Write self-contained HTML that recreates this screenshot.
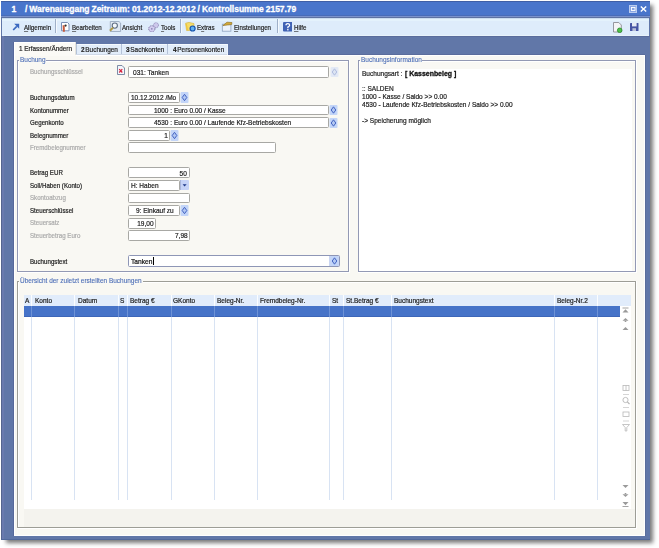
<!DOCTYPE html>
<html><head><meta charset="utf-8"><style>
html,body{margin:0;padding:0;background:#ffffff;}
body{width:659px;height:548px;position:relative;overflow:hidden;font-family:"Liberation Sans", sans-serif;}
body>div,body>svg{position:absolute;}
.t{white-space:pre;}
u{text-decoration:underline;text-decoration-thickness:0.5px;text-underline-offset:0.6px;text-decoration-color:rgba(40,40,40,0.6);}
</style></head><body>
<div style="left:6px;top:5px;width:647.1px;height:538.3px;background:rgba(10,10,10,0.55);filter:blur(1.9px)"></div>
<div style="left:1px;top:1px;width:649px;height:539px;background:#6177a8;"></div>
<div style="left:1px;top:1px;width:649px;height:1px;background:#3f5fa6;"></div>
<div style="left:1px;top:2px;width:649px;height:13px;background:#4975cb;"></div>
<div style="left:1px;top:15px;width:649px;height:1px;background:#486cb8;"></div>
<div style="left:1px;top:16px;width:649px;height:1px;background:#7a92cc;"></div>
<div style="left:1px;top:17px;width:649px;height:1px;background:#5e72a2;"></div>
<div style="left:2px;top:18px;width:647px;height:1px;background:#c9dcef;"></div>
<div style="left:2px;top:19px;width:647px;height:16px;background:#deecfb;"></div>
<div style="left:2px;top:19px;width:647px;height:2px;background:#e4f2fc;"></div>
<div style="left:2px;top:35px;width:647px;height:1px;background:#e8f3fb;"></div>
<div style="left:1px;top:36px;width:649px;height:1px;background:#5a6c9c;"></div>
<div style="left:2px;top:37px;width:647px;height:17px;background:#6177a8;"></div>
<div style="left:14px;top:54px;width:631px;height:1px;background:#5a6c9c;"></div>
<div style="left:13px;top:42px;width:1px;height:494px;background:#58699a;"></div>
<div style="left:2px;top:36px;width:2px;height:504px;background:#6a7aae;"></div>
<div style="left:1px;top:36px;width:1px;height:504px;background:#56658f;"></div>
<div style="left:645px;top:55px;width:1px;height:481px;background:#5a6d9a;"></div>
<div style="left:1px;top:539px;width:649px;height:1px;background:#52699b;"></div>
<div class="t" style="left:11.5px;top:5.20px;font-size:8.5px;line-height:8.5px;color:#ffffff;font-weight:bold;transform:scaleX(1);transform-origin:0 0;-webkit-text-stroke:0.3px #ffffff;">1</div>
<div class="t" style="left:25px;top:5.20px;font-size:8.5px;line-height:8.5px;color:#ffffff;font-weight:bold;transform:scaleX(1);transform-origin:0 0;-webkit-text-stroke:0.3px #ffffff;letter-spacing:-0.04px;word-spacing:-0.3px">/ Warenausgang Zeitraum: 01.2012-12.2012 / Kontrollsumme 2157.79</div>
<svg style="left:629px;top:5px" width="8" height="8" viewBox="0 0 8 8"><rect x="0.5" y="0.5" width="7" height="7" fill="#8aa6e2" stroke="#b9cbef" stroke-width="1"/><rect x="2.5" y="2.5" width="3.5" height="3" fill="none" stroke="#ffffff" stroke-width="0.9"/></svg>
<svg style="left:640px;top:6px" width="7" height="6" viewBox="0 0 7 6"><path d="M0.8 0.5 L6.2 5.5 M6.2 0.5 L0.8 5.5" stroke="#ffffff" stroke-width="1.4"/></svg>
<div class="t" style="left:23.5px;top:23.87px;font-size:7px;line-height:7px;color:#1e1e1e;font-weight:normal;transform:scaleX(0.88);transform-origin:0 0;-webkit-text-stroke:0.2px #1e1e1e;"><u>A</u>llgemein</div>
<div class="t" style="left:71.7px;top:23.87px;font-size:7px;line-height:7px;color:#1e1e1e;font-weight:normal;transform:scaleX(0.88);transform-origin:0 0;-webkit-text-stroke:0.2px #1e1e1e;"><u>B</u>earbeiten</div>
<div class="t" style="left:121.7px;top:23.87px;font-size:7px;line-height:7px;color:#1e1e1e;font-weight:normal;transform:scaleX(0.88);transform-origin:0 0;-webkit-text-stroke:0.2px #1e1e1e;">Ansi<u>c</u>ht</div>
<div class="t" style="left:160.8px;top:23.87px;font-size:7px;line-height:7px;color:#1e1e1e;font-weight:normal;transform:scaleX(0.88);transform-origin:0 0;-webkit-text-stroke:0.2px #1e1e1e;"><u>T</u>ools</div>
<div class="t" style="left:197.4px;top:23.87px;font-size:7px;line-height:7px;color:#1e1e1e;font-weight:normal;transform:scaleX(0.88);transform-origin:0 0;-webkit-text-stroke:0.2px #1e1e1e;">E<u>x</u>tras</div>
<div class="t" style="left:234.2px;top:23.87px;font-size:7px;line-height:7px;color:#1e1e1e;font-weight:normal;transform:scaleX(0.88);transform-origin:0 0;-webkit-text-stroke:0.2px #1e1e1e;"><u>E</u>instellungen</div>
<div class="t" style="left:293.7px;top:23.87px;font-size:7px;line-height:7px;color:#1e1e1e;font-weight:normal;transform:scaleX(0.88);transform-origin:0 0;-webkit-text-stroke:0.2px #1e1e1e;"><u>H</u>ilfe</div>
<div style="left:55px;top:19px;width:1px;height:14px;background:#9fb0c8;"></div>
<div style="left:56px;top:19px;width:1px;height:14px;background:#f4f9fe;"></div>
<div style="left:180px;top:19px;width:1px;height:14px;background:#9fb0c8;"></div>
<div style="left:181px;top:19px;width:1px;height:14px;background:#f4f9fe;"></div>
<div style="left:277px;top:19px;width:1px;height:14px;background:#9fb0c8;"></div>
<div style="left:278px;top:19px;width:1px;height:14px;background:#f4f9fe;"></div>
<svg style="left:12px;top:23px" width="8" height="8" viewBox="0 0 8 8"><path d="M1.2 7 L4.8 3.4" stroke="#3a68c0" stroke-width="1.7" fill="none"/><path d="M2.2 0.8 H7.2 V5.8 Z" fill="#3a68c0"/></svg>
<svg style="left:60px;top:21px" width="10" height="12" viewBox="0 0 10 12"><path d="M1.5 1.5 H7.5 L9 3 V9.8 H1.5 Z" fill="#ffffff" stroke="#7a90b8" stroke-width="1"/><path d="M3.6 4.2 L3.9 10.8" stroke="#c85a3c" stroke-width="2"/><circle cx="5.6" cy="4.6" r="1.1" fill="#2c3030"/></svg>
<svg style="left:108px;top:20px" width="14" height="13" viewBox="0 0 14 13"><path d="M2.3 1.5 H11 L12.6 3 V11.5 H2.3 Z" fill="#dfe8f3" stroke="#9aaac0" stroke-width="0.9"/><circle cx="6.8" cy="5.6" r="2.6" fill="#f4f8fc" stroke="#5f6f84" stroke-width="1.1"/><path d="M5 7.6 L2 10.8" stroke="#b09a48" stroke-width="2"/></svg>
<svg style="left:147px;top:20px" width="12" height="12" viewBox="0 0 12 12"><circle cx="9" cy="5.2" r="2.5" fill="#cdc8ec" stroke="#8c86b4" stroke-width="0.9" stroke-dasharray="1.2 0.6"/><circle cx="4.8" cy="8.8" r="3.1" fill="#d3cdf0" stroke="#807aa8" stroke-width="1" stroke-dasharray="1.3 0.7"/><circle cx="4.8" cy="8.8" r="0.9" fill="#8c86b4"/></svg>
<svg style="left:185px;top:21px" width="11" height="11" viewBox="0 0 11 11"><path d="M0.6 2.2 L4 1.4 L9 2.6 L8.6 9.2 L1.6 9.6 Z" fill="#f4dc6a" stroke="#d9b848" stroke-width="0.7"/><path d="M1.2 3 L2.6 9.2" stroke="#f0c63a" stroke-width="1.2"/><circle cx="7.6" cy="7.5" r="2.5" fill="#5fb0f0" stroke="#1452b0" stroke-width="1.2"/></svg>
<svg style="left:221px;top:21px" width="12" height="11" viewBox="0 0 12 11"><rect x="1.3" y="3.2" width="8.6" height="7" fill="#edf3fb" stroke="#8ea2c0" stroke-width="0.8"/><path d="M1.8 4.6 L6 1.2 L11 1.6 L10.6 3.6 L6.5 4 Z" fill="#d4aa38" stroke="#8a6a1a" stroke-width="0.6"/></svg>
<svg style="left:282.5px;top:22px" width="9.5" height="9.5" viewBox="0 0 9.5 9.5"><rect x="0" y="0" width="9.5" height="9.5" rx="1" fill="#3f62b4"/><path d="M3 3.3 Q3 1.7 4.8 1.7 Q6.6 1.7 6.6 3.2 Q6.6 4.3 4.9 5 L4.9 6.2" stroke="#fff" stroke-width="1.3" fill="none"/><rect x="4.2" y="7" width="1.3" height="1.4" fill="#fff"/></svg>
<svg style="left:613px;top:22px" width="10" height="11" viewBox="0 0 10 11"><path d="M0.5 0.5 H5.8 L8.3 3 V10 H0.5 Z" fill="#f4f4f6" stroke="#8c8c94" stroke-width="0.9"/><circle cx="6.7" cy="8.3" r="2.3" fill="#4fc04a" stroke="#2a8a2a" stroke-width="0.8"/></svg>
<svg style="left:630px;top:23px" width="9" height="8" viewBox="0 0 9 8"><rect x="0" y="0" width="8.5" height="8" rx="0.6" fill="#4654a4"/><rect x="2" y="0" width="4.6" height="3.4" fill="#e6eaf4"/><rect x="2.4" y="5.2" width="3.6" height="2.8" fill="#b8bfd8"/></svg>
<div style="left:14px;top:55px;width:631px;height:481px;background:#f9f8f3;"></div>
<div style="left:14px;top:55px;width:631px;height:1px;background:#ffffff;"></div>
<div style="left:14px;top:55px;width:1px;height:481px;background:#ffffff;"></div>
<div style="left:644px;top:55px;width:1px;height:481px;background:#ffffff;"></div>
<div style="left:14px;top:535px;width:631px;height:1px;background:#ffffff;"></div>
<div style="left:14px;top:42px;width:62px;height:14px;background:#fbfaf6;"></div>
<div style="left:14px;top:42px;width:62px;height:1px;background:#ffffff;"></div>
<div style="left:14px;top:42px;width:1px;height:14px;background:#ffffff;"></div>
<div style="left:75px;top:42px;width:1px;height:13px;background:#e4e3dd;"></div>
<div style="left:76px;top:44px;width:45px;height:11px;background:#e2edfa;"></div>
<div style="left:76px;top:44px;width:1px;height:11px;background:#b4c2d8;"></div>
<div style="left:77px;top:44px;width:44px;height:1px;background:#f4f9fe;"></div>
<div style="left:76px;top:54px;width:45px;height:1px;background:#d0dae8;"></div>
<div style="left:121px;top:44px;width:46px;height:11px;background:#e2edfa;"></div>
<div style="left:121px;top:44px;width:1px;height:11px;background:#b4c2d8;"></div>
<div style="left:122px;top:44px;width:45px;height:1px;background:#f4f9fe;"></div>
<div style="left:121px;top:54px;width:46px;height:1px;background:#d0dae8;"></div>
<div style="left:167px;top:44px;width:61px;height:11px;background:#e2edfa;"></div>
<div style="left:167px;top:44px;width:1px;height:11px;background:#b4c2d8;"></div>
<div style="left:168px;top:44px;width:60px;height:1px;background:#f4f9fe;"></div>
<div style="left:167px;top:54px;width:61px;height:1px;background:#d0dae8;"></div>
<div style="left:227px;top:44px;width:1px;height:11px;background:#eef4fc;"></div>
<div class="t" style="left:19.3px;top:45.47px;font-size:7px;line-height:7px;color:#1e1e1e;font-weight:normal;transform:scaleX(0.915);transform-origin:0 0;-webkit-text-stroke:0.2px #1e1e1e;">1 Erfassen/Ändern</div>
<div class="t" style="left:81px;top:45.67px;font-size:7px;line-height:7px;color:#1e1e1e;font-weight:normal;transform:scaleX(0.92);transform-origin:0 0;-webkit-text-stroke:0.2px #1e1e1e;word-spacing:-1px"><b style="font-weight:bold;margin-right:0.8px">2</b>Buchungen</div>
<div class="t" style="left:125.8px;top:45.67px;font-size:7px;line-height:7px;color:#1e1e1e;font-weight:normal;transform:scaleX(0.92);transform-origin:0 0;-webkit-text-stroke:0.2px #1e1e1e;word-spacing:-1px"><b style="font-weight:bold;margin-right:0.8px">3</b>Sachkonten</div>
<div class="t" style="left:172.7px;top:45.67px;font-size:7px;line-height:7px;color:#1e1e1e;font-weight:normal;transform:scaleX(0.92);transform-origin:0 0;-webkit-text-stroke:0.2px #1e1e1e;word-spacing:-1px"><b style="font-weight:bold;margin-right:0.8px">4</b>Personenkonten</div>
<div style="left:359px;top:62px;width:276px;height:7px;background:#f9f8f4;"></div>
<div style="left:359px;top:69px;width:273px;height:202px;background:#ffffff;"></div>
<div style="left:17px;top:60px;width:332px;height:1px;background:#9399b4;"></div>
<div style="left:17px;top:271px;width:332px;height:1px;background:#9399b4;"></div>
<div style="left:17px;top:60px;width:1px;height:212px;background:#9399b4;"></div>
<div style="left:348px;top:60px;width:1px;height:212px;background:#9399b4;"></div>
<div style="left:18px;top:61px;width:330px;height:1px;background:#ffffff;"></div>
<div style="left:18px;top:61px;width:1px;height:210px;background:#ffffff;"></div>
<div style="left:349px;top:60px;width:1px;height:213px;background:#ffffff;"></div>
<div style="left:17px;top:272px;width:333px;height:1px;background:#ffffff;"></div>
<div style="left:19px;top:56px;width:27px;height:7px;background:#f9f8f3;"></div>
<div class="t" style="left:20px;top:55.67px;font-size:7px;line-height:7px;color:#4a6cb6;font-weight:normal;transform:scaleX(0.925);transform-origin:0 0;-webkit-text-stroke:0.1px #4a6cb6;">Buchung</div>
<div style="left:358px;top:60px;width:278px;height:1px;background:#9399b4;"></div>
<div style="left:358px;top:271px;width:278px;height:1px;background:#9399b4;"></div>
<div style="left:358px;top:60px;width:1px;height:212px;background:#9399b4;"></div>
<div style="left:635px;top:60px;width:1px;height:212px;background:#9399b4;"></div>
<div style="left:359px;top:61px;width:276px;height:1px;background:#ffffff;"></div>
<div style="left:359px;top:61px;width:1px;height:210px;background:#ffffff;"></div>
<div style="left:636px;top:60px;width:1px;height:213px;background:#ffffff;"></div>
<div style="left:358px;top:272px;width:279px;height:1px;background:#ffffff;"></div>
<div style="left:360px;top:56px;width:62px;height:7px;background:#f9f8f3;"></div>
<div class="t" style="left:361px;top:55.87px;font-size:7px;line-height:7px;color:#4a6cb6;font-weight:normal;transform:scaleX(0.925);transform-origin:0 0;-webkit-text-stroke:0.1px #4a6cb6;">Buchungsinformation</div>
<div style="left:17px;top:281px;width:619px;height:1px;background:#9d9d96;"></div>
<div style="left:17px;top:527px;width:619px;height:1px;background:#9d9d96;"></div>
<div style="left:17px;top:281px;width:1px;height:247px;background:#9d9d96;"></div>
<div style="left:635px;top:281px;width:1px;height:247px;background:#9d9d96;"></div>
<div style="left:18px;top:282px;width:617px;height:1px;background:#ffffff;"></div>
<div style="left:18px;top:282px;width:1px;height:245px;background:#ffffff;"></div>
<div style="left:636px;top:281px;width:1px;height:248px;background:#ffffff;"></div>
<div style="left:17px;top:528px;width:620px;height:1px;background:#ffffff;"></div>
<div style="left:19px;top:277px;width:124px;height:7px;background:#f9f8f3;"></div>
<div class="t" style="left:20px;top:277.27px;font-size:7px;line-height:7px;color:#4a6cb6;font-weight:normal;transform:scaleX(0.925);transform-origin:0 0;-webkit-text-stroke:0.1px #4a6cb6;">Übersicht der zuletzt erstellten Buchungen</div>
<div class="t" style="left:29.8px;top:67.67px;font-size:7px;line-height:7px;color:#aaaaaa;font-weight:normal;transform:scaleX(0.88);transform-origin:0 0;-webkit-text-stroke:0.2px #aaaaaa;">Buchungsschlüssel</div>
<svg style="left:117px;top:65px" width="8" height="10" viewBox="0 0 8 10"><path d="M0.5 0.5 H5 L7.5 3 V9.5 H0.5 Z" fill="#f4f6fb" stroke="#6f7f9c" stroke-width="0.9"/><path d="M2.2 4.2 L5.3 7.5 M5.3 4.2 L2.2 7.5" stroke="#d8203a" stroke-width="1.2"/></svg>
<div style="left:128px;top:66px;width:201px;height:12px;box-sizing:border-box;background:#ffffff;border:1px solid #a8a8a4;border-radius:1.5px;"></div>
<div class="t" style="left:133.4px;top:69.25px;font-size:7.5px;line-height:7.5px;color:#1c1c1c;font-weight:normal;transform:scaleX(0.88);transform-origin:0 0;-webkit-text-stroke:0.2px #1c1c1c;">031: Tanken</div>
<svg style="left:330px;top:67px;opacity:0.4;" width="9" height="10" viewBox="0 0 9 10"><rect x="0.5" y="0" width="8" height="10" rx="1" fill="#c3d5f8"/><path d="M4.5 1.7999999999999998 L6.8 5.0 L4.5 8.2 L2.2 5.0 Z" fill="#b3c8f2" stroke="#3d5fc0" stroke-width="0.95"/></svg>
<div class="t" style="left:29.8px;top:94.07px;font-size:7px;line-height:7px;color:#1c1c1c;font-weight:normal;transform:scaleX(0.88);transform-origin:0 0;-webkit-text-stroke:0.2px #1c1c1c;">Buchungsdatum</div>
<div class="t" style="left:29.8px;top:106.67px;font-size:7px;line-height:7px;color:#1c1c1c;font-weight:normal;transform:scaleX(0.88);transform-origin:0 0;-webkit-text-stroke:0.2px #1c1c1c;">Kontonummer</div>
<div class="t" style="left:29.8px;top:119.07px;font-size:7px;line-height:7px;color:#1c1c1c;font-weight:normal;transform:scaleX(0.88);transform-origin:0 0;-webkit-text-stroke:0.2px #1c1c1c;">Gegenkonto</div>
<div class="t" style="left:29.8px;top:131.57px;font-size:7px;line-height:7px;color:#1c1c1c;font-weight:normal;transform:scaleX(0.88);transform-origin:0 0;-webkit-text-stroke:0.2px #1c1c1c;">Belegnummer</div>
<div class="t" style="left:29.8px;top:143.97px;font-size:7px;line-height:7px;color:#aaaaaa;font-weight:normal;transform:scaleX(0.88);transform-origin:0 0;-webkit-text-stroke:0.2px #aaaaaa;">Fremdbelegnummer</div>
<div class="t" style="left:29.8px;top:169.37px;font-size:7px;line-height:7px;color:#1c1c1c;font-weight:normal;transform:scaleX(0.88);transform-origin:0 0;-webkit-text-stroke:0.2px #1c1c1c;">Betrag EUR</div>
<div class="t" style="left:29.8px;top:182.07px;font-size:7px;line-height:7px;color:#1c1c1c;font-weight:normal;transform:scaleX(0.88);transform-origin:0 0;-webkit-text-stroke:0.2px #1c1c1c;">Soll/Haben (Konto)</div>
<div class="t" style="left:29.8px;top:194.27px;font-size:7px;line-height:7px;color:#aaaaaa;font-weight:normal;transform:scaleX(0.88);transform-origin:0 0;-webkit-text-stroke:0.2px #aaaaaa;">Skontoabzug</div>
<div class="t" style="left:29.8px;top:206.87px;font-size:7px;line-height:7px;color:#1c1c1c;font-weight:normal;transform:scaleX(0.88);transform-origin:0 0;-webkit-text-stroke:0.2px #1c1c1c;">Steuerschlüssel</div>
<div class="t" style="left:29.8px;top:219.07px;font-size:7px;line-height:7px;color:#aaaaaa;font-weight:normal;transform:scaleX(0.88);transform-origin:0 0;-webkit-text-stroke:0.2px #aaaaaa;">Steuersatz</div>
<div class="t" style="left:29.8px;top:232.07px;font-size:7px;line-height:7px;color:#aaaaaa;font-weight:normal;transform:scaleX(0.88);transform-origin:0 0;-webkit-text-stroke:0.2px #aaaaaa;">Steuerbetrag Euro</div>
<div class="t" style="left:29.8px;top:257.87px;font-size:7px;line-height:7px;color:#1c1c1c;font-weight:normal;transform:scaleX(0.88);transform-origin:0 0;-webkit-text-stroke:0.2px #1c1c1c;">Buchungstext</div>
<div style="left:128px;top:92px;width:52px;height:11px;box-sizing:border-box;background:#ffffff;border:1px solid #a8a8a4;border-radius:1.5px;"></div>
<div class="t" style="left:131px;top:94.07px;font-size:7px;line-height:7px;color:#1c1c1c;font-weight:normal;transform:scaleX(0.93);transform-origin:0 0;-webkit-text-stroke:0.2px #1c1c1c;">10.12.2012 /Mo</div>
<svg style="left:180px;top:92px;" width="9" height="11" viewBox="0 0 9 11"><rect x="0.5" y="0" width="8" height="11" rx="1" fill="#c3d5f8"/><path d="M4.5 2.3 L6.8 5.5 L4.5 8.7 L2.2 5.5 Z" fill="#b3c8f2" stroke="#3d5fc0" stroke-width="0.95"/></svg>
<div style="left:128px;top:105px;width:201px;height:10px;box-sizing:border-box;background:#ffffff;border:1px solid #a8a8a4;border-radius:1.5px;"></div>
<div class="t" style="left:153.7px;top:106.67px;font-size:7px;line-height:7px;color:#1c1c1c;font-weight:normal;transform:scaleX(0.93);transform-origin:0 0;-webkit-text-stroke:0.2px #1c1c1c;">1000 : Euro 0.00 / Kasse</div>
<svg style="left:329px;top:105px;" width="9" height="10" viewBox="0 0 9 10"><rect x="0.5" y="0" width="8" height="10" rx="1" fill="#c3d5f8"/><path d="M4.5 1.7999999999999998 L6.8 5.0 L4.5 8.2 L2.2 5.0 Z" fill="#b3c8f2" stroke="#3d5fc0" stroke-width="0.95"/></svg>
<div style="left:128px;top:117px;width:201px;height:11px;box-sizing:border-box;background:#ffffff;border:1px solid #a8a8a4;border-radius:1.5px;"></div>
<div class="t" style="left:153.7px;top:119.07px;font-size:7px;line-height:7px;color:#1c1c1c;font-weight:normal;transform:scaleX(0.93);transform-origin:0 0;-webkit-text-stroke:0.2px #1c1c1c;">4530 : Euro 0.00 / Laufende Kfz-Betriebskosten</div>
<svg style="left:329px;top:118px;" width="9" height="10" viewBox="0 0 9 10"><rect x="0.5" y="0" width="8" height="10" rx="1" fill="#c3d5f8"/><path d="M4.5 1.7999999999999998 L6.8 5.0 L4.5 8.2 L2.2 5.0 Z" fill="#b3c8f2" stroke="#3d5fc0" stroke-width="0.95"/></svg>
<div style="left:128px;top:130px;width:42px;height:11px;box-sizing:border-box;background:#ffffff;border:1px solid #a8a8a4;border-radius:1.5px;"></div>
<div class="t" style="right:491px;top:131.67px;font-size:7px;line-height:7px;color:#1c1c1c;font-weight:normal;text-align:right;transform:scaleX(0.93);transform-origin:100% 0;-webkit-text-stroke:0.2px #1c1c1c;">1</div>
<svg style="left:170px;top:130px;" width="9" height="11" viewBox="0 0 9 11"><rect x="0.5" y="0" width="8" height="11" rx="1" fill="#c3d5f8"/><path d="M4.5 2.3 L6.8 5.5 L4.5 8.7 L2.2 5.5 Z" fill="#b3c8f2" stroke="#3d5fc0" stroke-width="0.95"/></svg>
<div style="left:128px;top:142px;width:148px;height:11px;box-sizing:border-box;background:#ffffff;border:1px solid #a8a8a4;border-radius:1.5px;"></div>
<div style="left:128px;top:167px;width:62px;height:11px;box-sizing:border-box;background:#ffffff;border:1px solid #a8a8a4;border-radius:1.5px;"></div>
<div class="t" style="right:471.8px;top:169.57px;font-size:7px;line-height:7px;color:#1c1c1c;font-weight:normal;text-align:right;transform:scaleX(0.93);transform-origin:100% 0;-webkit-text-stroke:0.2px #1c1c1c;">50</div>
<div style="left:128px;top:180px;width:52px;height:11px;box-sizing:border-box;background:#ffffff;border:1px solid #a8a8a4;border-radius:1.5px;"></div>
<div class="t" style="left:130.5px;top:182.07px;font-size:7px;line-height:7px;color:#1c1c1c;font-weight:normal;transform:scaleX(0.93);transform-origin:0 0;-webkit-text-stroke:0.2px #1c1c1c;">H: Haben</div>
<svg style="left:180px;top:180px" width="9" height="10" viewBox="0 0 9 10"><rect x="0" y="0" width="9" height="10" rx="1" fill="#c6d3f7"/><rect x="0" y="0" width="1" height="10" fill="#a9b6dc"/><path d="M2.6 4.2 H6.6 L4.6 6.6 Z" fill="#1f3a8a"/></svg>
<div style="left:128px;top:193px;width:62px;height:10px;box-sizing:border-box;background:#ffffff;border:1px solid #a8a8a4;border-radius:1.5px;"></div>
<div style="left:128px;top:205px;width:52px;height:11px;box-sizing:border-box;background:#ffffff;border:1px solid #a8a8a4;border-radius:1.5px;"></div>
<div class="t" style="left:136px;top:207.07px;font-size:7px;line-height:7px;color:#1c1c1c;font-weight:normal;transform:scaleX(0.93);transform-origin:0 0;-webkit-text-stroke:0.2px #1c1c1c;">9: Einkauf zu</div>
<svg style="left:180px;top:205px;" width="9" height="11" viewBox="0 0 9 11"><rect x="0.5" y="0" width="8" height="11" rx="1" fill="#c3d5f8"/><path d="M4.5 2.3 L6.8 5.5 L4.5 8.7 L2.2 5.5 Z" fill="#b3c8f2" stroke="#3d5fc0" stroke-width="0.95"/></svg>
<div style="left:128px;top:218px;width:28px;height:11px;box-sizing:border-box;background:#ffffff;border:1px solid #a8a8a4;border-radius:1.5px;"></div>
<div class="t" style="right:505.6px;top:219.57px;font-size:7px;line-height:7px;color:#1c1c1c;font-weight:normal;text-align:right;transform:scaleX(0.93);transform-origin:100% 0;-webkit-text-stroke:0.2px #1c1c1c;">19,00</div>
<div style="left:128px;top:230px;width:62px;height:11px;box-sizing:border-box;background:#ffffff;border:1px solid #a8a8a4;border-radius:1.5px;"></div>
<div class="t" style="right:471.8px;top:232.07px;font-size:7px;line-height:7px;color:#1c1c1c;font-weight:normal;text-align:right;transform:scaleX(0.93);transform-origin:100% 0;-webkit-text-stroke:0.2px #1c1c1c;">7,98</div>
<div style="left:128px;top:255px;width:212px;height:12px;box-sizing:border-box;background:#ffffff;border:1px solid #8e96b6;border-radius:1.5px;"></div>
<div style="left:329px;top:256px;width:10px;height:10px;background:#c9d5f2;"></div>
<div class="t" style="left:131px;top:257.87px;font-size:7px;line-height:7px;color:#111;font-weight:normal;transform:scaleX(0.95);transform-origin:0 0;-webkit-text-stroke:0.2px #111;">Tanken</div>
<div style="left:153px;top:257px;width:1px;height:8px;background:#000;"></div>
<svg style="left:329.5px;top:256px;" width="9" height="10" viewBox="0 0 9 10"><rect x="0.5" y="0" width="8" height="10" rx="1" fill="#c3d5f8"/><path d="M4.5 1.7999999999999998 L6.8 5.0 L4.5 8.2 L2.2 5.0 Z" fill="#b3c8f2" stroke="#3d5fc0" stroke-width="0.95"/></svg>
<div class="t" style="left:362.3px;top:70.27px;font-size:7px;line-height:7px;color:#1c1c1c;font-weight:normal;transform:scaleX(0.935);transform-origin:0 0;-webkit-text-stroke:0.2px #1c1c1c;">Buchungsart : </div>
<div class="t" style="left:405px;top:70.27px;font-size:7px;line-height:7px;color:#111;font-weight:bold;transform:scaleX(0.99);transform-origin:0 0;-webkit-text-stroke:0.3px #111;">[ Kassenbeleg ]</div>
<div class="t" style="left:362.3px;top:85.47px;font-size:7px;line-height:7px;color:#1c1c1c;font-weight:normal;transform:scaleX(0.935);transform-origin:0 0;-webkit-text-stroke:0.2px #1c1c1c;">:: SALDEN</div>
<div class="t" style="left:362.3px;top:93.27px;font-size:7px;line-height:7px;color:#1c1c1c;font-weight:normal;transform:scaleX(0.935);transform-origin:0 0;-webkit-text-stroke:0.2px #1c1c1c;">1000 - Kasse / Saldo &gt;&gt; 0.00</div>
<div class="t" style="left:362.3px;top:101.07px;font-size:7px;line-height:7px;color:#1c1c1c;font-weight:normal;transform:scaleX(0.935);transform-origin:0 0;-webkit-text-stroke:0.2px #1c1c1c;">4530 - Laufende Kfz-Betriebskosten / Saldo &gt;&gt; 0.00</div>
<div class="t" style="left:362.3px;top:116.67px;font-size:7px;line-height:7px;color:#1c1c1c;font-weight:normal;transform:scaleX(0.935);transform-origin:0 0;-webkit-text-stroke:0.2px #1c1c1c;">-&gt; Speicherung möglich</div>
<div style="left:24px;top:295px;width:607px;height:214px;background:#ffffff;"></div>
<div style="left:24px;top:509px;width:611px;height:18px;background:#f4f3ee;"></div>
<div style="left:24px;top:295px;width:607px;height:11px;background:#e1ecfb;"></div>
<div style="left:24px;top:306px;width:596px;height:11px;background:#4673c8;"></div>
<div style="left:24px;top:316px;width:596px;height:1px;background:#3d66b8;"></div>
<div style="left:31px;top:295px;width:1px;height:11px;background:#fbfdff;"></div>
<div style="left:31px;top:306px;width:1px;height:11px;background:#6d92d6;"></div>
<div style="left:31px;top:317px;width:1px;height:183px;background:#d8e3f3;"></div>
<div style="left:74px;top:295px;width:1px;height:11px;background:#fbfdff;"></div>
<div style="left:74px;top:306px;width:1px;height:11px;background:#6d92d6;"></div>
<div style="left:74px;top:317px;width:1px;height:183px;background:#d8e3f3;"></div>
<div style="left:118px;top:295px;width:1px;height:11px;background:#fbfdff;"></div>
<div style="left:118px;top:306px;width:1px;height:11px;background:#6d92d6;"></div>
<div style="left:118px;top:317px;width:1px;height:183px;background:#d8e3f3;"></div>
<div style="left:127px;top:295px;width:1px;height:11px;background:#fbfdff;"></div>
<div style="left:127px;top:306px;width:1px;height:11px;background:#6d92d6;"></div>
<div style="left:127px;top:317px;width:1px;height:183px;background:#d8e3f3;"></div>
<div style="left:171px;top:295px;width:1px;height:11px;background:#fbfdff;"></div>
<div style="left:171px;top:306px;width:1px;height:11px;background:#6d92d6;"></div>
<div style="left:171px;top:317px;width:1px;height:183px;background:#d8e3f3;"></div>
<div style="left:214px;top:295px;width:1px;height:11px;background:#fbfdff;"></div>
<div style="left:214px;top:306px;width:1px;height:11px;background:#6d92d6;"></div>
<div style="left:214px;top:317px;width:1px;height:183px;background:#d8e3f3;"></div>
<div style="left:257px;top:295px;width:1px;height:11px;background:#fbfdff;"></div>
<div style="left:257px;top:306px;width:1px;height:11px;background:#6d92d6;"></div>
<div style="left:257px;top:317px;width:1px;height:183px;background:#d8e3f3;"></div>
<div style="left:329px;top:295px;width:1px;height:11px;background:#fbfdff;"></div>
<div style="left:329px;top:306px;width:1px;height:11px;background:#6d92d6;"></div>
<div style="left:329px;top:317px;width:1px;height:183px;background:#d8e3f3;"></div>
<div style="left:343px;top:295px;width:1px;height:11px;background:#fbfdff;"></div>
<div style="left:343px;top:306px;width:1px;height:11px;background:#6d92d6;"></div>
<div style="left:343px;top:317px;width:1px;height:183px;background:#d8e3f3;"></div>
<div style="left:391px;top:295px;width:1px;height:11px;background:#fbfdff;"></div>
<div style="left:391px;top:306px;width:1px;height:11px;background:#6d92d6;"></div>
<div style="left:391px;top:317px;width:1px;height:183px;background:#d8e3f3;"></div>
<div style="left:554px;top:295px;width:1px;height:11px;background:#fbfdff;"></div>
<div style="left:554px;top:306px;width:1px;height:11px;background:#6d92d6;"></div>
<div style="left:554px;top:317px;width:1px;height:183px;background:#d8e3f3;"></div>
<div style="left:597px;top:295px;width:1px;height:11px;background:#fbfdff;"></div>
<div style="left:597px;top:306px;width:1px;height:11px;background:#6d92d6;"></div>
<div style="left:597px;top:317px;width:1px;height:183px;background:#d8e3f3;"></div>
<div class="t" style="left:25px;top:297.27px;font-size:7px;line-height:7px;color:#1c1c1c;font-weight:normal;transform:scaleX(0.93);transform-origin:0 0;-webkit-text-stroke:0.2px #1c1c1c;">A</div>
<div class="t" style="left:34.5px;top:297.27px;font-size:7px;line-height:7px;color:#1c1c1c;font-weight:normal;transform:scaleX(0.93);transform-origin:0 0;-webkit-text-stroke:0.2px #1c1c1c;">Konto</div>
<div class="t" style="left:77.5px;top:297.27px;font-size:7px;line-height:7px;color:#1c1c1c;font-weight:normal;transform:scaleX(0.93);transform-origin:0 0;-webkit-text-stroke:0.2px #1c1c1c;">Datum</div>
<div class="t" style="left:120px;top:297.27px;font-size:7px;line-height:7px;color:#1c1c1c;font-weight:normal;transform:scaleX(0.93);transform-origin:0 0;-webkit-text-stroke:0.2px #1c1c1c;">S</div>
<div class="t" style="left:130px;top:297.27px;font-size:7px;line-height:7px;color:#1c1c1c;font-weight:normal;transform:scaleX(0.93);transform-origin:0 0;-webkit-text-stroke:0.2px #1c1c1c;">Betrag €</div>
<div class="t" style="left:173px;top:297.27px;font-size:7px;line-height:7px;color:#1c1c1c;font-weight:normal;transform:scaleX(0.93);transform-origin:0 0;-webkit-text-stroke:0.2px #1c1c1c;">GKonto</div>
<div class="t" style="left:216.5px;top:297.27px;font-size:7px;line-height:7px;color:#1c1c1c;font-weight:normal;transform:scaleX(0.93);transform-origin:0 0;-webkit-text-stroke:0.2px #1c1c1c;">Beleg-Nr.</div>
<div class="t" style="left:259.8px;top:297.27px;font-size:7px;line-height:7px;color:#1c1c1c;font-weight:normal;transform:scaleX(0.93);transform-origin:0 0;-webkit-text-stroke:0.2px #1c1c1c;">Fremdbeleg-Nr.</div>
<div class="t" style="left:332px;top:297.27px;font-size:7px;line-height:7px;color:#1c1c1c;font-weight:normal;transform:scaleX(0.93);transform-origin:0 0;-webkit-text-stroke:0.2px #1c1c1c;">St</div>
<div class="t" style="left:346px;top:297.27px;font-size:7px;line-height:7px;color:#1c1c1c;font-weight:normal;transform:scaleX(0.93);transform-origin:0 0;-webkit-text-stroke:0.2px #1c1c1c;">St.Betrag €</div>
<div class="t" style="left:394.3px;top:297.27px;font-size:7px;line-height:7px;color:#1c1c1c;font-weight:normal;transform:scaleX(0.93);transform-origin:0 0;-webkit-text-stroke:0.2px #1c1c1c;">Buchungstext</div>
<div class="t" style="left:557px;top:297.27px;font-size:7px;line-height:7px;color:#1c1c1c;font-weight:normal;transform:scaleX(0.93);transform-origin:0 0;-webkit-text-stroke:0.2px #1c1c1c;">Beleg-Nr.2</div>
<svg style="left:621px;top:307px" width="9" height="25" viewBox="0 0 9 25"><path d="M1.5 1 H7.5" stroke="#9a9a9a" stroke-width="0.9"/><path d="M4.5 2.2 L7.5 5.5 H1.5 Z" fill="#9a9a9a"/><path d="M4.5 11 L7.5 13.8 H1.5 Z" fill="#9a9a9a"/><rect x="3.7" y="13.8" width="1.6" height="1.2" fill="#9a9a9a"/><path d="M4.5 20 L7.5 23 H1.5 Z" fill="#9a9a9a"/></svg>
<svg style="left:621px;top:484px" width="9" height="24" viewBox="0 0 9 24"><path d="M1.5 1 H7.5 L4.5 4 Z" fill="#9a9a9a"/><rect x="3.7" y="9" width="1.6" height="1.2" fill="#9a9a9a"/><path d="M1.5 10.2 H7.5 L4.5 13 Z" fill="#9a9a9a"/><path d="M1.5 18 H7.5 L4.5 21.2 Z" fill="#9a9a9a"/><path d="M1.5 22.5 H7.5" stroke="#9a9a9a" stroke-width="0.9"/></svg>
<svg style="left:621px;top:384px" width="10" height="48" viewBox="0 0 10 48"><rect x="2" y="1.5" width="6" height="5" fill="none" stroke="#b8b8b8" stroke-width="0.8"/><path d="M5 1.5 V6.5" stroke="#b8b8b8" stroke-width="0.8"/><path d="M2 10.5 H8" stroke="#b8b8b8" stroke-width="0.6"/><circle cx="4.5" cy="16" r="2.6" fill="none" stroke="#b8b8b8" stroke-width="0.9"/><path d="M6.3 17.8 L8.5 20" stroke="#b8b8b8" stroke-width="1.2"/><path d="M2 23.5 H8" stroke="#b8b8b8" stroke-width="0.6"/><rect x="2" y="28" width="6" height="4.5" fill="none" stroke="#b8b8b8" stroke-width="0.8"/><path d="M2 37 H8" stroke="#b8b8b8" stroke-width="0.6"/><path d="M1.5 40.5 H8.5 L5.8 43.5 V47 H4.2 V43.5 Z" fill="none" stroke="#b8b8b8" stroke-width="0.8"/></svg>
</body></html>
